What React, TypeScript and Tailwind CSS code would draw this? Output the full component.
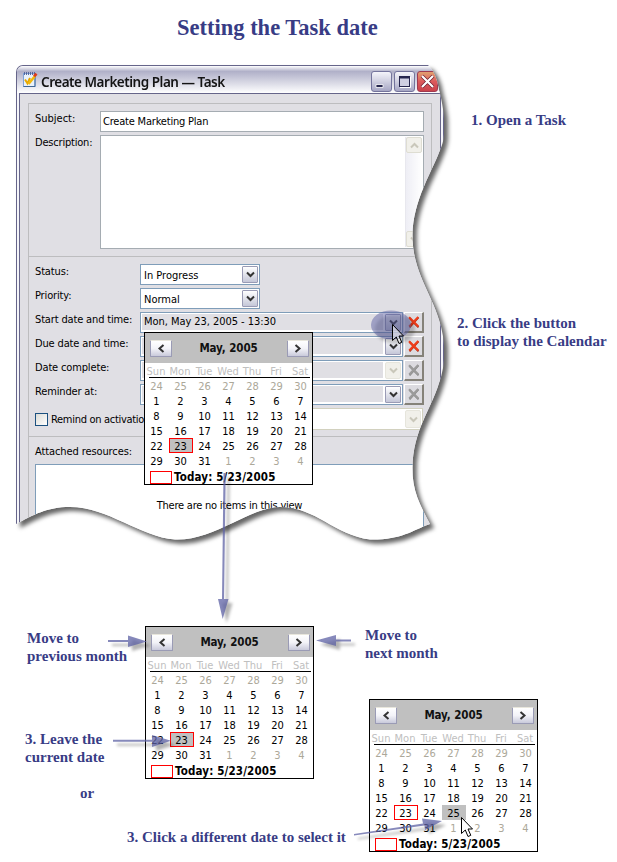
import type { ReactNode } from "react";

const SANS = "font-['DejaVu_Sans_Condensed','DejaVu_Sans',sans-serif]";

function Chevron({ dir, tone = "#333" }: { dir: "left" | "right" | "down" | "up"; tone?: string }) {
  const d = {
    left: "M6.5 1 L2.5 4.5 L6.5 8",
    right: "M2.5 1 L6.5 4.5 L2.5 8",
    down: "M1 2.5 L4.5 6 L8 2.5",
    up: "M1 6.5 L4.5 3 L8 6.5",
  }[dir];
  return (
    <svg width="9" height="9" viewBox="0 0 9 9" className="block shrink-0">
      <path d={d} fill="none" stroke={tone} strokeWidth="2" />
    </svg>
  );
}

const DAYS = ["Sun", "Mon", "Tue", "Wed", "Thu", "Fri", "Sat"];
const DATES = [
  24, 25, 26, 27, 28, 29, 30,
  ...Array.from({ length: 31 }, (_, i) => i + 1),
  1, 2, 3, 4,
];

function NavButton({ dir }: { dir: "left" | "right" }) {
  return (
    <div className="flex h-[17px] w-[22px] items-center justify-center rounded-[1px] border border-[#9a9bb5] border-t-[#e8e6dc] bg-linear-to-b from-white via-[#f3f3f8] to-[#c9cadb]">
      <Chevron dir={dir} />
    </div>
  );
}

function Calendar({ picked }: { picked: 23 | 25 }) {
  return (
    <div className={`h-[153px] w-[169px] overflow-hidden border border-black bg-white text-[11px] text-black ${SANS}`}>
      <div className="flex h-[30px] items-center justify-between bg-[#c0c0c0] pr-[3px] pl-[5px]">
        <NavButton dir="left" />
        <span className="mr-[2px] text-[11.5px] font-bold tracking-[-0.1px] text-[#111]">May, 2005</span>
        <NavButton dir="right" />
      </div>
      <div className="mr-[2px] ml-[4px] h-[15px] border-b border-black">
        <div className="-ml-[5px] grid w-[168px] grid-cols-[repeat(7,24px)] pt-[1px] text-center leading-[15px] text-[#c0c0c0]">
          {DAYS.map((d) => (
            <span key={d} className="whitespace-nowrap">{d}</span>
          ))}
        </div>
      </div>
      <div className="grid w-[168px] grid-cols-[repeat(7,24px)] text-center">
        {DATES.map((n, i) => {
          const outside = i < 7 || i > 37;
          const today = i === 29;
          const isPicked = !outside && n === picked;
          return (
            <span
              key={i}
              className={`h-[15px] pr-[1px] ${outside ? "text-[#aca899]" : ""} ${isPicked ? "bg-[#c0c0c0]" : ""} ${today ? "border border-[#f00] leading-[15px]" : "leading-[17px]"}`}
            >
              {n}
            </span>
          );
        })}
      </div>
      <div className="flex h-[16px] items-end pl-[5px]">
        <span className="h-[13px] w-[22px] border border-[#f00]" />
        <span className="ml-[2px] pb-[1px] text-[11.5px] leading-[11px] font-bold tracking-[0.15px] whitespace-nowrap">Today: 5/23/2005</span>
      </div>
    </div>
  );
}

function DropButton({ disabled = false }: { disabled?: boolean }) {
  return disabled ? (
    <div className="flex w-[16px] items-center justify-center rounded-[2px] border border-[#e6e5dc] bg-[#f1f0ea]">
      <Chevron dir="down" tone="#c9c7ba" />
    </div>
  ) : (
    <div className="flex w-[16px] items-center justify-center rounded-[1px] border border-[#9a9bb5] bg-linear-to-b from-white to-[#c5c7d8]">
      <Chevron dir="down" />
    </div>
  );
}

function Combo({ value }: { value: string }) {
  return (
    <div className="flex h-[21px] w-[120px] justify-between border border-[#7f9db9] bg-white p-px">
      <span className="pl-[2px] leading-[19px]">{value}</span>
      <DropButton />
    </div>
  );
}

function DateField({ value = "", disabled = false, clearable = false }: { value?: string; disabled?: boolean; clearable?: boolean }) {
  const c = clearable ? "#ee3c1a" : "#9b9b9b";
  const shade = clearable ? "#a02a18" : "#858585";
  return (
    <div className="flex gap-[1px]">
      <div className="flex h-[21px] w-[263px] border border-[#7f9db9] bg-white p-px">
        <span className="mr-[2px] mb-[1px] h-[16px] flex-1 bg-[#e0dfe4] pl-[2px] leading-[16px] tracking-[-0.05px]">{value}</span>
        <DropButton disabled={disabled} />
      </div>
      <div className="flex h-[21px] w-[20px] items-center justify-center border-t border-r-2 border-b-2 border-l border-t-white border-r-[#858279] border-b-[#858279] border-l-white bg-[#dcdbe0]">
        <svg width="12" height="12" viewBox="0 0 12 12">
          <path d="M1.5 2 L10.5 11.3 M10.5 1.5 L1.5 11.3" stroke={shade} strokeWidth="1.8" fill="none" />
          <path d="M1 1.2 L10.3 10.5 M10.3 1 L1.3 10.5" stroke={c} strokeWidth="2.2" fill="none" />
        </svg>
      </div>
    </div>
  );
}

function Row({ label, children }: { label: string; children: ReactNode }) {
  return (
    <div className="flex h-[24px]">
      <span className="w-[105px] shrink-0 leading-[15px] tracking-[-0.15px] whitespace-nowrap">{label}</span>
      {children}
    </div>
  );
}

function CaptionButton({ kind }: { kind: "min" | "max" | "close" }) {
  return (
    <div
      className={`h-[21px] w-[21px] rounded-[3px] border ${kind === "close" ? "border-[#a03a50] bg-linear-to-b from-[#e0a070] via-[#dc5a5c] to-[#c9434c]" : "border-[#74749c] bg-linear-to-b from-[#f4f4fa] via-[#cfcfe0] to-[#a6a6c4]"}`}
    >
      <svg width="19" height="19" viewBox="0 0 19 19" className="block">
        {kind === "min" && <path d="M4 12.5h7v3h-7z" fill="#26264e" stroke="#fff" strokeWidth="0.8" />}
        {kind === "max" && (
          <>
            <rect x="4.5" y="4.5" width="10" height="10" fill="#cfcfe2" stroke="#26264e" />
            <path d="M4 5.5h11" stroke="#26264e" strokeWidth="2" />
            <path d="M15.5 5v10.5H5" fill="none" stroke="#fff" />
          </>
        )}
        {kind === "close" && (
          <>
            <path d="M4 4 L15 15 M15 4 L4 15" stroke="#6e2030" strokeWidth="3.6" />
            <path d="M4 4 L15 15 M15 4 L4 15" stroke="#fff" strokeWidth="2.2" />
          </>
        )}
      </svg>
    </div>
  );
}

function TaskIcon() {
  return (
    <svg width="15" height="17" viewBox="0 0 15 17" className="block shrink-0">
      <rect x="0.5" y="2.5" width="11.5" height="13" fill="#e9f1fb" stroke="#7fa3d8" />
      <path d="M0.5 15.5h11.5V5" fill="none" stroke="#3f6796" />
      <path d="M1.5 1v3M3.5 1v3M5.5 1v3M7.5 1v3M9.5 1v3M11.5 1v3" stroke="#4c5c94" strokeWidth="0.9" />
      <path d="M2 8.5 L4.5 12.5 L7 7" fill="none" stroke="#e6a800" strokeWidth="2" />
      <path d="M5.5 13 L12 5" stroke="#f3b80c" strokeWidth="2.4" />
      <path d="M11 5.2 L13.5 2.7" stroke="#dc3c1c" strokeWidth="2.8" />
    </svg>
  );
}

function TaskWindow() {
  return (
    <div className="font-normal drop-shadow-[4px_4px_2px_rgba(0,0,0,0.6)]">
      <div className="h-[475px] w-[428px] [clip-path:path('M0_0_L412_0_Q420_7_423_25_C430_50_430_75_424_85_C417_105_397_135_396.500_170_C396_205_416_230_423_255_C430_275_430_300_423_318_C415_345_397_365_396.500_403_C396_425_404_440_414_459_C395_466_385_475_354_474.500_C318_470_300_442_264_442_C234_442_198_476_159_474.500_C124_472_92_442_54_442_C30_442_18_450_0_459_Z')]">
        <div className={`flex h-full flex-col overflow-hidden rounded-t-[7px] border-t border-r border-l border-[#66658a] bg-[#f5f5f9] text-[11px] text-black ${SANS}`}>
          <div className="flex h-[27px] shrink-0 items-center bg-linear-to-b from-white from-0% via-[#b0b0c8] via-20% to-white pr-[5px] pl-[6px]">
            <TaskIcon />
            <span className="mt-[4px] ml-[3px] font-['Noto_Sans','Open_Sans',sans-serif] text-[13.5px] font-semibold tracking-[-0.48px] whitespace-nowrap text-[#141414]">
              Create Marketing Plan — Task
            </span>
            <div className="ml-auto flex gap-[2px] pt-[4px]">
              <CaptionButton kind="min" />
              <CaptionButton kind="max" />
              <CaptionButton kind="close" />
            </div>
          </div>
          <div className="mx-[2px] flex-1 border border-b-0 border-[#66658a] bg-[#e0dfe4] pt-[9px] pr-[8px] pl-[8px]">
            <div className="h-full border border-b-0 border-[#bdbdbf]">
              <section className="h-[153px] border-b border-[#bdbdbf] pt-[7px] pl-[6px]">
                <div className="flex h-[24px]">
                  <span className="w-[65px] leading-[15px]">Subject:</span>
                  <div className="h-[21px] w-[324px] border border-[#a5acb2] bg-white pl-[2px] leading-[20px] tracking-[-0.2px]">Create Marketing Plan</div>
                </div>
                <div className="flex">
                  <span className="w-[65px] leading-[15px] tracking-[-0.2px]">Description:</span>
                  <div className="flex h-[114px] w-[324px] justify-end border border-[#a5acb2] bg-white p-px">
                    <div className="flex w-[17px] flex-col justify-between border-l border-[#e8e8ee] bg-linear-to-r from-[#eeeef5] to-white">
                      <div className="flex h-[16px] items-center justify-center rounded-[2px] border border-[#deddd2] bg-[#f1f0ea]"><Chevron dir="up" tone="#c9c7ba" /></div>
                      <div className="flex h-[16px] items-center justify-center rounded-[2px] border border-[#deddd2] bg-[#f1f0ea]"><Chevron dir="down" tone="#c9c7ba" /></div>
                    </div>
                  </div>
                </div>
              </section>
              <section className="h-[180px] border-b border-[#bdbdbf] pt-[7px] pl-[6px]">
                <Row label="Status:"><Combo value="In Progress" /></Row>
                <Row label="Priority:"><Combo value="Normal" /></Row>
                <Row label="Start date and time:"><DateField value="Mon, May 23, 2005 - 13:30" clearable /></Row>
                <Row label="Due date and time:"><DateField clearable /></Row>
                <Row label="Date complete:"><DateField disabled /></Row>
                <Row label="Reminder at:"><DateField /></Row>
                <div className="flex h-[22px] items-center">
                  <span className="h-[13px] w-[13px] border border-[#1c5180] bg-linear-to-br from-[#dcdcd7] to-white" />
                  <span className="mr-[15px] ml-[3px] w-[95px] leading-[15px] tracking-[-0.3px] whitespace-nowrap">Remind on activatio</span>
                  <div className="flex h-[22px] w-[262px] justify-between border border-[#d2d1bf] bg-white p-px">
                    <span className="flex-1" />
                    <DropButton disabled />
                  </div>
                </div>
              </section>
              <section className="pt-[7px] pl-[6px]">
                <div className="h-[20px] leading-[15px] tracking-[-0.1px]">Attached resources:</div>
                <div className="h-[90px] w-[389px] border border-[#7f9db9] bg-white pt-[33px] text-center leading-[15px] tracking-[-0.24px]">
                  There are no items in this view
                </div>
              </section>
            </div>
          </div>
        </div>
      </div>
    </div>
  );
}

function Pointer({ x, y, opacity = 1 }: { x: number; y: number; opacity?: number }) {
  return (
    <path
      transform={`translate(${x} ${y})`}
      d="M0.5 0.5 V16.5 L4.3 13 L7 19.5 L9.8 18.3 L7 12 H11.5 Z"
      fill="#fff"
      fillOpacity={opacity}
      stroke="#000"
    />
  );
}

function Annotations() {
  return (
    <svg width="617" height="862" viewBox="0 0 617 862" className="pointer-events-none absolute inset-0">
      <defs>
        <filter id="soft" x="0" y="0" width="617" height="862" filterUnits="userSpaceOnUse" colorInterpolationFilters="sRGB">
          <feDropShadow dx="4" dy="4" stdDeviation="1.8" floodColor="#000" floodOpacity="0.4" />
        </filter>
      </defs>
      <g filter="url(#soft)" fill="#5e61a4" fillOpacity="0.75">
        <path d="M223.5 473 H225.7 L224 599 H228.5 L222.7 619 L218 599 H222 Z" />
        <path d="M108 640 H128 V635.5 L147 641.5 L128 647 V642 H108 Z" />
        <path d="M351 639.5 H336 V635 L316 640.5 L336 646 V641.5 H351 Z" />
        <path d="M113 739.7 H152 V735 L171 740.7 L152 747 V741.7 H113 Z" />
        <path d="M354 834 L423 823.5 L422 818.5 L442 821 L425 830 L424.5 825.5 L354 835.5 Z" />
        <ellipse cx="391" cy="325" rx="20" ry="14.5" fillOpacity="0.5" />
      </g>
      <Pointer x={392} y={324} opacity={0.55} />
      <Pointer x={461} y={817} />
    </svg>
  );
}

export default function App() {
  return (
    <main className="relative h-[862px] w-[617px] overflow-hidden bg-white font-['Liberation_Serif',serif] text-[15px] leading-[18px] font-bold text-[#383c85]">
      <h1 className="absolute top-[14px] left-[177px] text-[22.5px] leading-[28px] whitespace-nowrap">Setting the Task date</h1>
      <div className="absolute top-[65px] left-[16px]"><TaskWindow /></div>
      <div className="absolute top-[332px] left-[144px] font-normal"><Calendar picked={23} /></div>
      <div className="absolute top-[626px] left-[145px] font-normal"><Calendar picked={23} /></div>
      <div className="absolute top-[699px] left-[369px] font-normal"><Calendar picked={25} /></div>
      <p className="absolute top-[111px] left-[471px] whitespace-nowrap">1. Open a Task</p>
      <p className="absolute top-[314px] left-[457px] whitespace-nowrap">2. Click the button<br />to display the Calendar</p>
      <p className="absolute top-[629px] left-[27px] whitespace-nowrap">Move to<br />previous month</p>
      <p className="absolute top-[626px] left-[365px] whitespace-nowrap">Move to<br />next month</p>
      <p className="absolute top-[730px] left-[25px] whitespace-nowrap">3. Leave the<br />current date</p>
      <p className="absolute top-[784px] left-[80px] whitespace-nowrap">or</p>
      <p className="absolute top-[828px] left-[127px] whitespace-nowrap">3. Click a different date to select it</p>
      <Annotations />
    </main>
  );
}
